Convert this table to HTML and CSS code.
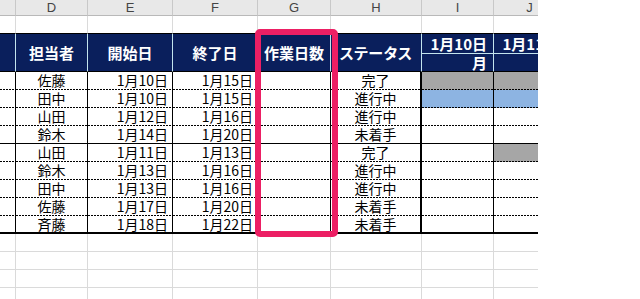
FILE: index.html
```html
<!DOCTYPE html>
<html lang="ja">
<head>
<meta charset="utf-8">
<title>作業スケジュール</title>
<link rel="stylesheet" href="styles.css">
</head>
<body>
<div class="page">
  <div class="sheet">
    <div class="grid">
      <!-- column letters -->
      <div class="letter"></div>
      <div class="letter">D</div>
      <div class="letter">E</div>
      <div class="letter">F</div>
      <div class="letter">G</div>
      <div class="letter">H</div>
      <div class="letter">I</div>
      <div class="letter">J</div>

      <!-- empty row above table -->
      <div class="blank edge"></div><div class="blank edge"></div><div class="blank edge"></div><div class="blank edge"></div>
      <div class="blank edge"></div><div class="blank edge"></div><div class="blank edge"></div><div class="blank edge"></div>

      <!-- header -->
      <div class="hd span2"></div>
      <div class="hd span2">担当者</div>
      <div class="hd span2">開始日</div>
      <div class="hd span2">終了日</div>
      <div class="hd span2">作業日数</div>
      <div class="hd span2 kana">ステータス</div>
      <div class="hd hd-top">1月10日</div>
      <div class="hd hd-top">1月11日</div>
      <div class="hd hd-bot">月</div>
      <div class="hd hd-bot">火</div>

      <!-- data rows -->
      <div class="c"></div><div class="c mid">佐藤</div><div class="c num">1月10日</div><div class="c num">1月15日</div><div class="c"></div><div class="c mid thick">完了</div><div class="c gray"></div><div class="c gray"></div>
      <div class="c"></div><div class="c mid">田中</div><div class="c num">1月10日</div><div class="c num">1月15日</div><div class="c"></div><div class="c mid thick">進行中</div><div class="c blue"></div><div class="c blue"></div>
      <div class="c"></div><div class="c mid">山田</div><div class="c num">1月12日</div><div class="c num">1月16日</div><div class="c"></div><div class="c mid thick">進行中</div><div class="c"></div><div class="c"></div>
      <div class="c end"></div><div class="c end mid">鈴木</div><div class="c end num">1月14日</div><div class="c end num">1月20日</div><div class="c end"></div><div class="c end mid thick">未着手</div><div class="c end"></div><div class="c end"></div>
      <div class="c"></div><div class="c mid">山田</div><div class="c num">1月11日</div><div class="c num">1月13日</div><div class="c"></div><div class="c mid thick">完了</div><div class="c"></div><div class="c gray"></div>
      <div class="c"></div><div class="c mid">鈴木</div><div class="c num">1月13日</div><div class="c num">1月16日</div><div class="c"></div><div class="c mid thick">進行中</div><div class="c"></div><div class="c"></div>
      <div class="c"></div><div class="c mid">田中</div><div class="c num">1月13日</div><div class="c num">1月16日</div><div class="c"></div><div class="c mid thick">進行中</div><div class="c"></div><div class="c"></div>
      <div class="c"></div><div class="c mid">佐藤</div><div class="c num">1月17日</div><div class="c num">1月20日</div><div class="c"></div><div class="c mid thick">未着手</div><div class="c"></div><div class="c"></div>
      <div class="c last"></div><div class="c last mid">斉藤</div><div class="c last num">1月18日</div><div class="c last num">1月22日</div><div class="c last"></div><div class="c last mid thick">未着手</div><div class="c last"></div><div class="c last"></div>

      <!-- empty rows below -->
      <div class="blank"></div><div class="blank"></div><div class="blank"></div><div class="blank"></div><div class="blank"></div><div class="blank"></div><div class="blank"></div><div class="blank"></div>
      <div class="blank"></div><div class="blank"></div><div class="blank"></div><div class="blank"></div><div class="blank"></div><div class="blank"></div><div class="blank"></div><div class="blank"></div>
      <div class="blank"></div><div class="blank"></div><div class="blank"></div><div class="blank"></div><div class="blank"></div><div class="blank"></div><div class="blank"></div><div class="blank"></div>
      <div class="blank"></div><div class="blank"></div><div class="blank"></div><div class="blank"></div><div class="blank"></div><div class="blank"></div><div class="blank"></div><div class="blank"></div>
    </div>
  </div>
  <div class="highlight"></div>
</div>
</body>
</html>
```

FILE: styles.css
```css
* { box-sizing: border-box; }

html, body {
  margin: 0;
  padding: 0;
  background: #fff;
}

.page {
  position: relative;
  width: 640px;
  height: 299px;
  overflow: hidden;
  font-family: "Noto Sans CJK JP", "Noto Sans", sans-serif;
}

.sheet {
  width: 538px;
  height: 299px;
  overflow: hidden;
}

.grid {
  display: grid;
  grid-template-columns: 16px 72px 85px 85px 73px 91px 72px 72px;
  grid-template-rows: 16px 18px 20px 18px;
  grid-auto-rows: 18px;
  width: 566px;
}

.letter {
  background: #e8e8e8;
  border-right: 1px solid #c8c8c8;
  border-bottom: 1px solid #b9b9b9;
  font-family: "Liberation Sans", Arial, sans-serif;
  font-size: 13px;
  line-height: 15px;
  color: #444;
  text-align: center;
}

.blank {
  border-right: 1px solid #dadada;
  border-bottom: 1px solid #dadada;
}

.blank.edge {
  border-bottom: 1px solid #000;
}

.hd {
  background: #0a1f5c;
  color: #fff;
  font-weight: bold;
  font-size: 15px;
  border-right: 1px solid #c3e4ee;
  border-bottom: 1px solid #000;
  display: flex;
  align-items: center;
  justify-content: center;
  white-space: nowrap;
  overflow: hidden;
}

.hd.span2 {
  grid-row: span 2;
}

.hd.kana {
  font-feature-settings: "palt";
  letter-spacing: 0.5px;
}

.hd.hd-top {
  border-bottom: 1px solid #c3e4ee;
  justify-content: flex-end;
  padding-right: 6px;
  line-height: 19px;
}

.hd.hd-bot {
  justify-content: flex-end;
  padding-right: 6px;
  line-height: 17px;
}

.c {
  border-right: 1px solid #000;
  background-image: repeating-linear-gradient(90deg, #000 0 2px, transparent 2px 3px);
  background-size: 100% 1px;
  background-position: left bottom;
  background-repeat: no-repeat;
  font-size: 14px;
  line-height: 17px;
  color: #000;
  white-space: nowrap;
  overflow: hidden;
}

.c.end {
  background-image: none;
  border-bottom: 1px solid #000;
}

.c.last {
  background-image: none;
  border-bottom: 2px solid #000;
}

.c.mid { text-align: center; }
.c.num { text-align: right; padding-right: 4px; }
.c.thick { border-right: 2px solid #000; }

.c.gray { background-color: #a6a6a6; }
.c.blue { background-color: #8db4e2; }

.highlight {
  position: absolute;
  left: 255px;
  top: 29px;
  width: 83px;
  height: 208px;
  border: 6px solid #ec1f64;
  border-radius: 5px;
}
```
